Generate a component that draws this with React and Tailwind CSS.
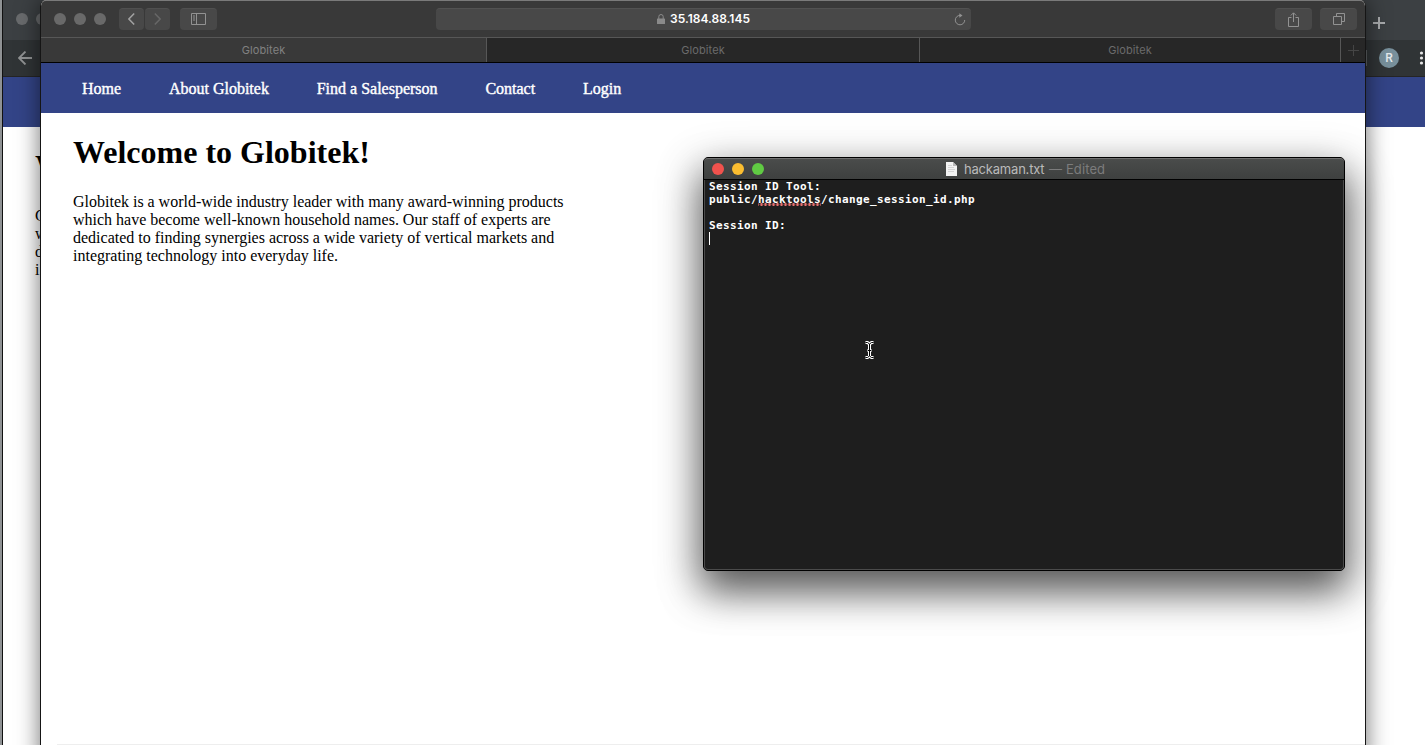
const SITE_TITLE = "Welcome to Globitek!";
const SITE_LINES = [
  "Globitek is a world-wide industry leader with many award-winning products",
  "which have become well-known household names. Our staff of experts are",
  "dedicated to finding synergies across a wide variety of vertical markets and",
  "integrating technology into everyday life.",
];
const NAV = ["Home", "About Globitek", "Find a Salesperson", "Contact", "Login"];

function SiteBody({ title, lines }) {
  return (
    <main className="pl-8 pt-[21px] font-['Liberation_Serif',serif] text-black">
      <h1 className="whitespace-nowrap text-[32px] font-bold leading-[37px]">{title}</h1>
      <div className="mt-[22px] whitespace-nowrap text-[16px] leading-[18px] [word-spacing:-0.05px]">
        {lines.map((l) => (
          <p key={l}>{l}</p>
        ))}
      </div>
    </main>
  );
}

function BackBrowser() {
  return (
    <section className="absolute left-[2px] top-0 h-[745px] w-[1423px] overflow-hidden border-l border-[#111] bg-white">
      <div className="flex h-10 items-center justify-between bg-[#3c4043] pl-[13px] pr-10">
        <div className="-mt-[2px] flex gap-2">
          <i className="size-3 rounded-full bg-[#696b6d]" />
          <i className="size-3 rounded-full bg-[#696b6d]" />
        </div>
        <svg className="mt-[6px] size-3" viewBox="0 0 12 12" stroke="#a9abad" strokeWidth="2">
          <path d="M6 0v12M0 6h12" />
        </svg>
      </div>
      <div className="flex h-[37px] items-center justify-between border-b border-[#252525] bg-[#303436] pl-[15px]">
        <svg className="size-[14px]" viewBox="0 0 14 14" fill="none" stroke="#919394" strokeWidth="1.8">
          <path d="M14 7H1M7.5.5 1 7l6.5 6.5" />
        </svg>
        <div className="flex items-center">
          <i className="mr-[12px] h-4 w-px bg-[#606467]" />
          <span className="mr-[20px] flex size-5 items-center justify-center rounded-full bg-[#78909c] font-['Roboto',sans-serif] text-[12px] font-medium text-[#e5eaec]">
            R
          </span>
          <svg className="mr-px h-[14px] w-[5px]" viewBox="0 0 5 14" fill="#e5e5e5">
            <circle cx="2.5" cy="2" r="1.6" />
            <circle cx="2.5" cy="7" r="1.6" />
            <circle cx="2.5" cy="12" r="1.6" />
          </svg>
        </div>
      </div>
      <div className="h-[50px] bg-[#334487]" />
      <SiteBody title="W" lines={["G", "w", "d", "i"]} />
    </section>
  );
}

function ToolButton({ className, children }) {
  return (
    <span className={"flex h-[22px] items-center justify-center rounded border-t border-[#505050] bg-[#484848] pb-px " + className}>
      {children}
    </span>
  );
}

function FrontBrowser() {
  return (
    <section className="absolute left-[40px] top-0 h-[765px] w-[1326px] overflow-hidden rounded-t-[6px] border-x border-[#151515] bg-white shadow-[0_0_22px_1px_rgba(0,0,0,0.52)]">
      <div className="flex h-[38px] items-center rounded-t-[5px] border-b border-t border-b-[#575757] border-t-[#7a7a7a] bg-[#393939] pl-[13px] pr-[8px]">
        <div className="flex gap-2">
          <i className="size-3 rounded-full bg-[#696969]" />
          <i className="size-3 rounded-full bg-[#696969]" />
          <i className="size-3 rounded-full bg-[#696969]" />
        </div>
        <ToolButton className="ml-[13px] w-[25px]">
          <svg className="h-3 w-[7px]" viewBox="0 0 7 12" fill="none" stroke="#a0a0a0" strokeWidth="1.5">
            <path d="M6.2.5.9 6l5.3 5.5" />
          </svg>
        </ToolButton>
        <ToolButton className="ml-px w-[25px]">
          <svg className="h-3 w-[7px]" viewBox="0 0 7 12" fill="none" stroke="#666" strokeWidth="1.5">
            <path d="m.8.5 5.3 5.5-5.3 5.5" />
          </svg>
        </ToolButton>
        <ToolButton className="ml-[10px] w-[37px]">
          <svg className="h-3 w-[15px]" viewBox="0 0 15 12" fill="none" stroke="#929292">
            <path d="M.5.5h14v11H.5zM5.5.5v11M2 3h2M2 5h2M2 7h2" />
          </svg>
        </ToolButton>
        <div className="ml-[219px] flex h-[22px] w-[535px] items-center rounded-[4px] border-t border-[#525252] bg-[#484848] pb-px pl-[221px] pr-[5px]">
          <svg className="h-[10px] w-2" viewBox="0 0 8 10">
            <path d="M1.8 5V2.7a2.2 2.2 0 0 1 4.4 0V5" fill="none" stroke="#8a8a8a" />
            <rect y="4.5" width="8" height="5.5" rx=".6" fill="#8a8a8a" />
          </svg>
          <span className="ml-[5px] w-20 whitespace-nowrap font-['Inter',sans-serif] text-[12px] font-semibold leading-none text-white">
            35.184.88.145
          </span>
          <svg className="ml-auto h-[13px] w-3" viewBox="0 0 12 13" fill="none" stroke="#929292">
            <path d="M6 2.4A4.7 4.7 0 1 0 10.7 7" />
            <path d="M5.3.3 8.5 2.5 5.3 4.7z" fill="#929292" stroke="none" />
          </svg>
        </div>
        <ToolButton className="ml-auto w-[37px]">
          <svg className="h-[15px] w-[11px]" viewBox="0 0 11 15" fill="none" stroke="#929292">
            <path d="M3.5 5.5h-3v9h10v-9h-3M5.5 10V1M2.8 3.5 5.5.8l2.7 2.7" />
          </svg>
        </ToolButton>
        <ToolButton className="ml-2 w-[37px]">
          <svg className="size-3" viewBox="0 0 12 12" fill="none" stroke="#929292">
            <path d="M.5 3.5h8v8h-8zM3.5 3.5v-3h8v8h-3" />
          </svg>
        </ToolButton>
      </div>
      <div className="flex h-[25px] border-b border-black bg-[#272727] text-center font-['Inter',sans-serif] text-[11px] leading-6 tracking-[0.1px] text-[#6b6b6b]">
        <div className="w-[446px] border-r border-[#575757] bg-[#393939] text-[#818181]">Globitek</div>
        <div className="w-[433px] border-r border-[#575757]">Globitek</div>
        <div className="w-[421px] border-r border-[#575757]">Globitek</div>
        <div className="flex flex-1 items-center justify-center">
          <svg className="size-[11px]" viewBox="0 0 11 11" stroke="#454545">
            <path d="M5.5 0v11M0 5.5h11" />
          </svg>
        </div>
      </div>
      <nav className="flex h-[50px] gap-[47.8px] bg-[#334487] pl-[41px] font-['Liberation_Serif',serif] text-[16px] leading-[51px] text-white [-webkit-text-stroke:0.4px_white]">
        {NAV.map((n) => (
          <span key={n} className="whitespace-nowrap">{n}</span>
        ))}
      </nav>
      <SiteBody title={SITE_TITLE} lines={SITE_LINES} />
      <div className="ml-4 mt-[479px] h-px bg-[#eeeeee]" />
    </section>
  );
}

function Editor() {
  return (
    <section className="absolute left-[703px] top-[157px] flex h-[414px] w-[642px] flex-col rounded-[5px] border border-black bg-[#1e1e1e] shadow-[0_19px_38px_rgba(0,0,0,0.55),0_14px_44px_5px_rgba(0,0,0,0.25)]">
      <div className="flex h-[22px] shrink-0 items-center rounded-t-[4px] border-b border-t border-b-black border-t-[#707070] bg-gradient-to-b from-[#4a4c4b] to-[#3e403f] pl-2">
        <div className="flex gap-2">
          <i className="size-3 rounded-full bg-[#f0524d]" />
          <i className="size-3 rounded-full bg-[#fbbd30]" />
          <i className="size-3 rounded-full bg-[#60ca43]" />
        </div>
        <svg className="ml-[182px] h-[14px] w-[11px]" viewBox="0 0 11 14">
          <path d="M0 0h7l4 4v10H0z" fill="#f3f3f3" />
          <path d="M7 0v4h4z" fill="#b9b9b9" />
          <path d="M2 3.5h4M2 5.5h6M2 7.5h7M2 9.5h6" stroke="#c7c7c7" strokeWidth=".7" />
        </svg>
        <span className="ml-[7px] whitespace-nowrap font-['Inter',sans-serif] text-[13px] leading-5 text-[#bababa]">
          <span className="tracking-[-0.2px]">hackaman.txt</span>{" "}
          <span className="ml-px tracking-[0.1px] text-[#7c7c7c]">— Edited</span>
        </span>
      </div>
      <div className="flex-1 rounded-b-[4px] border-x border-b border-[#4b4b4b] pl-1 font-['DejaVu_Sans_Mono',monospace] text-[11px] font-bold leading-[13px] tracking-[0.38px] text-white">
        <p>Session ID Tool:</p>
        <p className="whitespace-nowrap">
          public/
          <span className="bg-[radial-gradient(circle,#e8706f_1.3px,transparent_1.6px)] bg-[length:4px_3px] bg-bottom bg-repeat-x">
            hacktools
          </span>
          /change_session_id.php
        </p>
        <p className="h-[13px]" />
        <p>Session ID:</p>
        <div className="h-[13px] w-px bg-white" />
      </div>
    </section>
  );
}

export default function App() {
  return (
    <div className="relative h-[745px] w-[1425px] overflow-hidden bg-[#8f9294]">
      <BackBrowser />
      <FrontBrowser />
      <Editor />
      <svg className="absolute left-[864px] top-[341px] h-[18px] w-[11px]" viewBox="0 0 11 18" fill="none">
        <path d="M1.5 1.5h2l2 1.5 2-1.5h2M5.5 3v12M1.5 16.5h2l2-1.5 2 1.5h2M3.5 9.5h4" stroke="#fff" strokeWidth="3" />
        <path d="M1.5 1.5h2l2 1.5 2-1.5h2M5.5 3v12M1.5 16.5h2l2-1.5 2 1.5h2M4 9.5h3" stroke="#000" />
      </svg>
    </div>
  );
}
